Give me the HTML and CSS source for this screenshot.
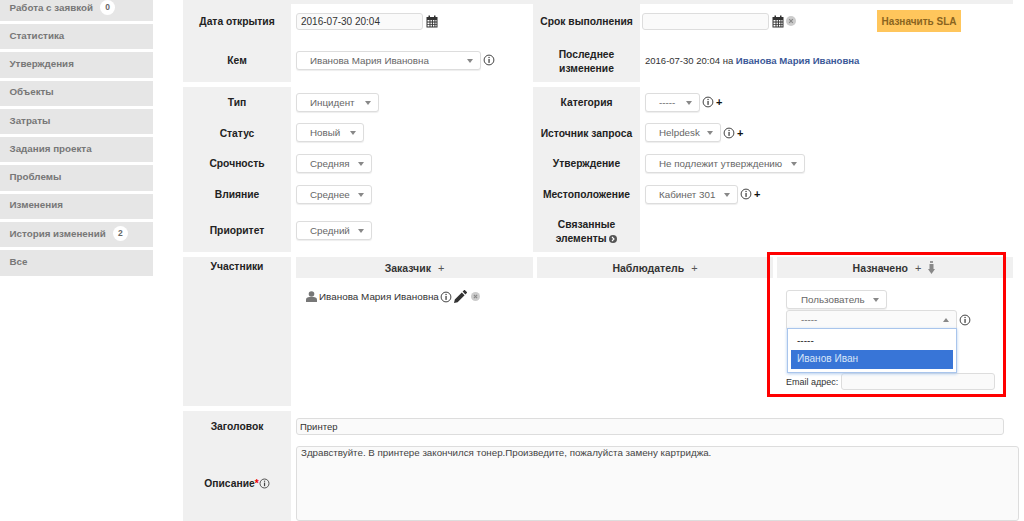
FILE: index.html
```html
<!DOCTYPE html>
<html lang="ru">
<head>
<meta charset="utf-8">
<title>Заявка</title>
<link rel="stylesheet" href="styles.css">
</head>
<body>
<svg class="defs" width="0" height="0" aria-hidden="true">
  <symbol id="info" viewBox="0 0 12 12"><circle cx="6" cy="6" r="4.9" fill="none" stroke="#444" stroke-width="1"/><rect x="5.4" y="5" width="1.3" height="3.9" fill="#444"/><rect x="5.4" y="2.9" width="1.3" height="1.2" fill="#444"/></symbol>
  <symbol id="cal" viewBox="1 0 11 13"><path fill="#333" d="M1 2h2V.5h1.5V2h4V.5H10V2h2v10.5H1zM2 5v1.6h2V5zm3 0v1.6h1.4V5zm2.4 0v1.6h1.5V5zm2.5 0v1.6H11V5zM2 7.5v1.7h2V7.5zm3 0v1.7h1.4V7.5zm2.4 0v1.7h1.5V7.5zm2.5 0v1.7H11V7.5zM2 10.1v1.5h2v-1.5zm3 0v1.5h1.4v-1.5zm2.4 0v1.5h1.5v-1.5zm2.5 0v1.5H11v-1.5z"/></symbol>
  <symbol id="del" viewBox="0 0 10 10"><circle cx="5" cy="5" r="5" fill="#ccc"/><path d="M3.2 3.2l3.6 3.6M6.8 3.2L3.2 6.8" stroke="#888" stroke-width="1.2"/></symbol>
</svg>
<div class="page">
  <nav class="side">
    <div class="tab tab-first">Работа с заявкой <span class="count">0</span></div>
    <div class="tab">Статистика</div>
    <div class="tab">Утверждения</div>
    <div class="tab">Объекты</div>
    <div class="tab">Затраты</div>
    <div class="tab">Задания проекта</div>
    <div class="tab">Проблемы</div>
    <div class="tab">Изменения</div>
    <div class="tab">История изменений <span class="count">2</span></div>
    <div class="tab">Все</div>
  </nav>
  <main class="main">
    <div class="strip"></div>

    <section class="form form-a">
      <div class="lab">Дата открытия</div>
      <div class="val"><input class="inp inp-date" value="2016-07-30 20:04"><svg class="ic-cal"><use href="#cal"/></svg></div>
      <div class="lab">Срок выполнения</div>
      <div class="val val-r2"><input class="inp inp-date"><svg class="ic-cal"><use href="#cal"/></svg><svg class="ic-del"><use href="#del"/></svg><span class="sla">Назначить SLA</span></div>

      <div class="lab">Кем</div>
      <div class="val"><span class="sel w185">Иванова Мария Ивановна</span><svg class="ic-info"><use href="#info"/></svg></div>
      <div class="lab">Последнее<br>изменение</div>
      <div class="val"><span class="txt txt-change">2016-07-30 20:04 на <a class="link">Иванова Мария Ивановна</a></span></div>
    </section>

    <section class="form form-b">
      <div class="lab">Тип</div>
      <div class="val"><span class="sel w83">Инцидент</span></div>
      <div class="lab">Категория</div>
      <div class="val"><span class="sel w55">-----</span><svg class="ic-info"><use href="#info"/></svg><b class="plus">+</b></div>

      <div class="lab">Статус</div>
      <div class="val"><span class="sel w68">Новый</span></div>
      <div class="lab">Источник запроса</div>
      <div class="val"><span class="sel w76">Helpdesk</span><svg class="ic-info"><use href="#info"/></svg><b class="plus">+</b></div>

      <div class="lab">Срочность</div>
      <div class="val"><span class="sel w76">Средняя</span></div>
      <div class="lab">Утверждение</div>
      <div class="val"><span class="sel w160">Не подлежит утверждению</span></div>

      <div class="lab">Влияние</div>
      <div class="val"><span class="sel w76">Среднее</span></div>
      <div class="lab">Местоположение</div>
      <div class="val"><span class="sel w93">Кабинет 301</span><svg class="ic-info"><use href="#info"/></svg><b class="plus">+</b></div>

      <div class="lab lab-up">Приоритет</div>
      <div class="val"><span class="sel w76">Средний</span></div>
      <div class="lab">Связанные<br>элементы <svg class="ic-more" viewBox="0 0 8 8"><circle cx="4" cy="4" r="4" fill="#555"/><path d="M3 2l2 2-2 2" fill="none" stroke="#fff" stroke-width="1.1"/></svg></div>
      <div class="val"></div>
    </section>

    <section class="actors">
      <div class="lab lab-top">Участники</div>
      <div class="actor a1">
        <div class="ahead">Заказчик <span class="aplus">+</span></div>
        <div class="person">
          <svg class="ic-user" viewBox="0 0 11 11"><circle cx="5.5" cy="3" r="2.8" fill="#777"/><path d="M0 11V8.4C0 7 1.6 6 3.4 6h4.2C9.4 6 11 7 11 8.4V11z" fill="#777"/></svg>
          <span class="txt txt-person">Иванова Мария Ивановна</span>
          <svg class="ic-info i2"><use href="#info"/></svg>
          <svg class="ic-pen" viewBox="0 0 13 13"><path fill="#333" d="M0 13l.8-3.6 7-7 2.8 2.8-7 7zM8.6 1.6L10 .2c.3-.3.7-.3 1 0l1.8 1.8c.3.3.3.7 0 1l-1.4 1.4z"/></svg>
          <svg class="ic-del d2"><use href="#del"/></svg>
        </div>
      </div>
      <div class="actor a2">
        <div class="ahead">Наблюдатель <span class="aplus">+</span></div>
      </div>
      <div class="actor a3">
        <div class="ahead">Назначено <span class="aplus">+</span>
          <svg class="ic-assign" viewBox="0 0 7 13"><rect x="2" y="0" width="3" height="2" fill="#999"/><rect x="1.5" y="3" width="4" height="6" fill="#888"/><path d="M0 8h7l-3.5 5z" fill="#888"/></svg>
        </div>
        <div class="assign">
          <span class="sel w101">Пользователь</span>
          <div class="combo-row">
            <span class="sel w171 sel-open">-----</span><svg class="ic-info"><use href="#info"/></svg>
          </div>
          <div class="email"><span class="txt txt-mail">Email адрес:</span><input class="inp inp-mail"></div>
          <ul class="drop">
            <li>-----</li>
            <li class="hl">Иванов Иван</li>
          </ul>
        </div>
      </div>
    </section>

    <section class="texts">
      <div class="lab lab-title">Заголовок</div>
      <div class="tval"><input class="inp inp-title" value="Принтер"></div>
      <div class="lab lab-desc">Описание<span class="req">*</span><svg class="ic-info i3"><use href="#info"/></svg></div>
      <div class="tval"><textarea class="area">Здравствуйте. В принтере закончился тонер.Произведите, пожалуйста замену картриджа.</textarea></div>
    </section>
  </main>
</div>
<div class="redbox"></div>
</body>
</html>
```
FILE: styles.css
```css
* { box-sizing: border-box; }
html, body { margin: 0; height: 521px; overflow: hidden; background: #fff; }
body { font-family: "Liberation Sans", Arial, sans-serif; font-size: 10px; color: #333; position: relative; }
.defs { position: absolute; }
.page { display: flex; align-items: flex-start; }

.side { width: 153px; flex: none; display: flex; flex-direction: column; gap: 3px; }
.tab { height: 25.3px; background: #e6e6e6; color: #777; font-weight: 700; font-size: 9.8px; padding: 0 0 3px 9.5px; display: flex; align-items: center; gap: 4px; }
.tab-first { height: 21px; padding-bottom: 7px; }
.count { width: 15px; height: 15px; border-radius: 50%; background: #fff; color: #666; font-size: 8.5px; display: inline-flex; align-items: center; justify-content: center; margin-left: 3px; }

.main { margin-left: 30px; width: 830px; flex: none; }
.strip { height: 4px; background: #f0f0f0; }

.form { display: grid; grid-template-columns: 108px 242px 107px 373px; margin-bottom: 5px; }
.form-a { grid-template-rows: 34px 44px; }
.form-b { grid-template-rows: 30.5px 30.5px 30.5px 31px 42.5px; }
.lab { background: #f0f0f0; color: #222; font-weight: 700; font-size: 10.3px; line-height: 14px; text-align: center; display: flex; flex-direction: column; align-items: center; justify-content: center; padding-top: 2px; }
.form .lab:nth-last-child(2) { display: block; padding-top: 8.5px; }
.form-a .lab:nth-last-child(2) { padding-top: 10px; }
.lab-up { padding-bottom: 2px; }
.val { display: flex; align-items: center; padding-left: 5px; background: #fff; }
.val-r2 { padding-left: 2px; }

.inp { height: 17px; border: 1px solid #ddd; border-radius: 3px; background: #fafafa; font: 10px "Liberation Sans", Arial, sans-serif; color: #333; padding: 0 4px; outline: 0; }
.inp-date { width: 127px; }
.ic-cal { width: 12px; height: 13px; margin-left: 3px; }
.ic-del { width: 10px; height: 10px; margin-left: 2px; }
.ic-info { width: 12px; height: 12px; margin-left: 2px; flex: none; }
.sla { margin-left: 81px; width: 84px; height: 22px; background: #ffc65c; color: #8a6420; font-weight: 700; font-size: 10px; display: flex; align-items: center; justify-content: center; }
.plus { font-size: 11px; line-height: 12px; color: #111; margin-left: 2px; }

.sel { position: relative; height: 19px; display: inline-flex; align-items: center; padding-left: 13px; border: 1px solid #ddd; border-radius: 3px; background: #fff; box-shadow: 0 1px 1px #eee; color: #666; font-size: 9.8px; flex: none; }
.assign .sel { padding-left: 14px; }
.sel::after { content: ""; position: absolute; right: 7px; top: 7px; border-left: 3px solid transparent; border-right: 3px solid transparent; border-top: 4px solid #888; }
.sel-open::after { border-top: 0; border-bottom: 4px solid #888; }
.sel-open { border-radius: 3px 3px 0 0; background: #fafafa; }
.w55 { width: 55px; } .w68 { width: 68px; } .w76 { width: 76px; } .w83 { width: 83px; } .w93 { width: 93px; }
.w101 { width: 101px; } .w160 { width: 160px; } .w171 { width: 171px; } .w185 { width: 185px; }
.txt { font-size: 10px; color: #333; }
.txt-change { font-size: 9.5px; }
.txt-person { font-size: 9.9px; }
.txt-mail { font-size: 9px; }
.link { color: #3b5998; font-weight: 700; font-size: 9.6px; }
.ic-more { width: 8px; height: 8px; vertical-align: -1px; }

.actors { display: grid; grid-template-columns: 108px 242px 240px 240px; height: 149px; margin-bottom: 5px; }
.lab-top { justify-content: flex-start; padding-top: 3px; }
.actor { padding-left: 5px; }
.a2, .a3 { padding-left: 4px; }
.ahead { height: 21px; background: #f0f0f0; color: #333; font-weight: 700; font-size: 10.5px; display: flex; align-items: center; justify-content: center; gap: 7px; }
.a3 .ahead { padding-right: 2px; }
.aplus { font-weight: 400; color: #555; font-size: 11px; }
.ic-assign { width: 7px; height: 13px; }
.person { display: flex; align-items: center; padding: 12px 0 0 10px; }
.person .txt { margin-left: 2px; }
.ic-user { width: 11px; height: 11px; }
.i2 { margin-left: 1px; }
.ic-pen { width: 13px; height: 13px; margin-left: 2px; }
.d2 { margin-left: 4px; width: 9px; height: 9px; }

.assign { position: relative; padding: 12px 0 0 9px; }
.combo-row { display: flex; align-items: center; margin-top: 1px; }
.email { display: flex; align-items: center; margin-top: 44px; gap: 3px; }
.inp-mail { width: 154px; }
.drop { position: absolute; left: 10px; top: 50px; width: 170px; height: 45px; margin: 0; padding: 6px 3px 3px; list-style: none; background: #fff; border: 1px solid #a9c5ec; box-shadow: 0 1px 3px #b4cdee; font-size: 10.1px; color: #333; }
.drop li { height: 15px; line-height: 12px; padding-left: 6px; }
.drop .hl { height: 19px; line-height: 18px; background: #3875d7; color: #d9e6f8; }

.texts { display: grid; grid-template-columns: 108px 722px; grid-template-rows: 35px 75px; }
.lab-title { padding-bottom: 5px; }
.lab-desc { flex-direction: row; padding-bottom: 2px; }
.req { color: #e00; }
.i3 { margin-left: 0; width: 11px; height: 11px; }
.tval { padding-left: 5px; }
.inp-title { width: 708px; margin-top: 7px; font-size: 9.5px; padding: 0 3px; }
.area { display: block; width: 723px; height: 75px; border: 1px solid #ddd; border-radius: 3px; background: #fafafa; font: 9.75px "Liberation Sans", Arial, sans-serif; color: #444; padding: 0 4px; resize: none; outline: 0; }

.redbox { position: absolute; left: 767px; top: 252px; width: 239px; height: 145px; border: 3px solid #f00; pointer-events: none; }
```
